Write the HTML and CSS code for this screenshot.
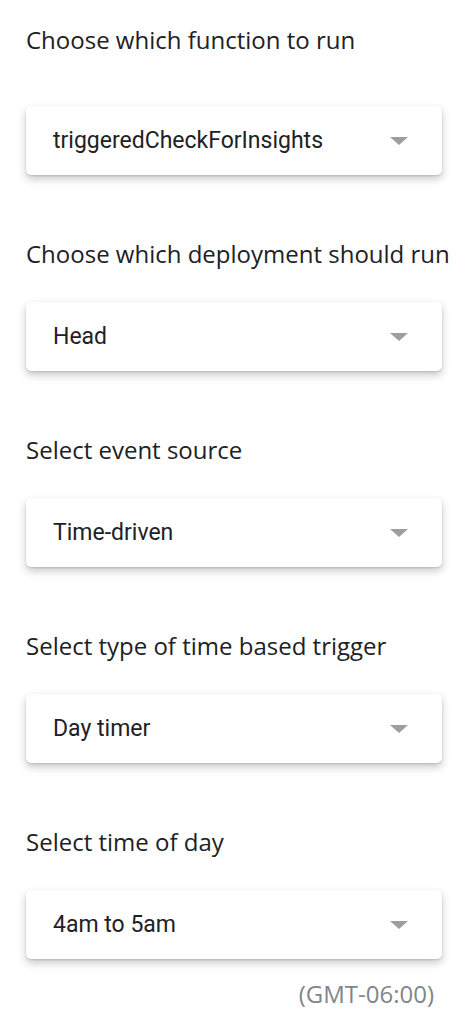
FILE: index.html
```html
<!DOCTYPE html>
<html lang="en">
<head>
   <meta charset="UTF-8">
   <meta name="viewport" content="width=device-width, initial-scale=1.0">
   <title>Add trigger</title>
   <link rel="stylesheet" href="styles.css">
</head>
<body>
   <div class="form">
      <!-- Function -->
      <div class="field">
         <div class="label">Choose which function to run</div>
         <div class="select">
            <span class="value">triggeredCheckForInsights</span>
            <span class="arrow"></span>
         </div>
      </div>
      <!-- Deployment -->
      <div class="field">
         <div class="label">Choose which deployment should run</div>
         <div class="select">
            <span class="value">Head</span>
            <span class="arrow"></span>
         </div>
      </div>
      <!-- Event source -->
      <div class="field">
         <div class="label">Select event source</div>
         <div class="select">
            <span class="value">Time-driven</span>
            <span class="arrow"></span>
         </div>
      </div>
      <!-- Trigger type -->
      <div class="field">
         <div class="label">Select type of time based trigger</div>
         <div class="select">
            <span class="value">Day timer</span>
            <span class="arrow"></span>
         </div>
      </div>
      <!-- Time of day -->
      <div class="field">
         <div class="label">Select time of day</div>
         <div class="select">
            <span class="value">4am to 5am</span>
            <span class="arrow"></span>
         </div>
         <div class="hint">(GMT-06:00)</div>
      </div>
   </div>
</body>
</html>
```

FILE: styles.css
```css
body {
   margin: 0;
   padding: 0;
   background-color: #ffffff;
   color: #202124;
}

.form {
   display: flex;
   flex-direction: column;
   gap: 65px;
   padding: 26px 26px 0 26px;
}

.field {
   display: flex;
   flex-direction: column;
}

.label {
   font-family: "Open Sans", sans-serif;
   font-size: 24px;
   line-height: 28px;
   color: #202124;
   margin-bottom: 34px;
   white-space: nowrap;
}

/* first label sits a bit further from its box */
.field:first-child .label {
   margin-bottom: 52px;
}

.select {
   display: flex;
   align-items: center;
   justify-content: space-between;
   height: 69px;
   padding: 0 34px 0 27px;
   background: #ffffff;
   border-radius: 5px;
   box-shadow: 0 4px 8px rgba(0, 0, 0, 0.22), 0 1px 2px rgba(0, 0, 0, 0.12);
}

.value {
   font-family: Roboto, sans-serif;
   font-size: 23px;
   color: #202124;
}

.arrow {
   width: 0;
   height: 0;
   border-left: 9px solid transparent;
   border-right: 9px solid transparent;
   border-top: 8px solid #9e9e9e;
}

.hint {
   align-self: flex-end;
   margin-top: 21px;
   margin-right: 8px;
   font-family: "Open Sans", sans-serif;
   font-size: 24px;
   line-height: 28px;
   color: #80868b;
}
```
